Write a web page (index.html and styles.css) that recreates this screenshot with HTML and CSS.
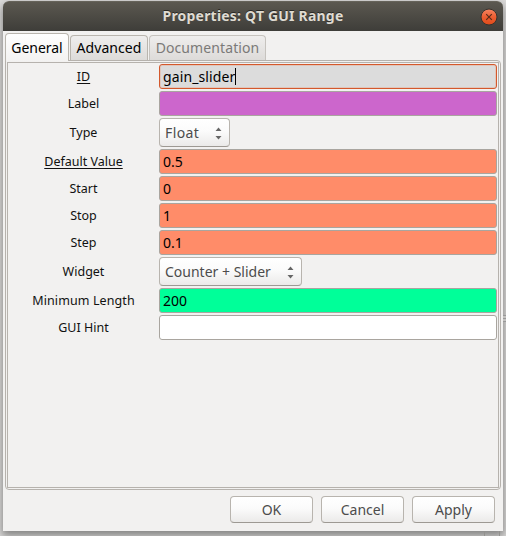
FILE: index.html
```
<!DOCTYPE html>
<html lang="en">
<head>
<meta charset="utf-8">
<title>Properties: QT GUI Range</title>
<link rel="stylesheet" href="styles.css">
</head>
<body>
<div class="window">
  <header class="titlebar">
    <h1>Properties: QT GUI Range</h1>
    <svg class="close" viewBox="0 0 18 18"><defs><linearGradient id="g" x2="0" y2="1"><stop offset="0" stop-color="#f58562"/><stop offset=".5" stop-color="#ec5e32"/><stop offset="1" stop-color="#df4a19"/></linearGradient></defs><circle cx="9" cy="9" r="8" fill="url(#g)" stroke="#35332e"/><path d="M6.2 6.2l5.6 5.6M11.8 6.2l-5.6 5.6" stroke="#5a2c1a" stroke-width="1.2"/></svg>
  </header>
  <nav class="tabs">
    <div class="tab active">General</div>
    <div class="tab advanced">Advanced</div>
    <div class="tab docs">Documentation</div>
  </nav>
  <main class="panel">
    <div class="form">
      <label class="key"><span>ID</span></label><div class="field focus"><span class="id-value">gain_slider</span><i class="caret"></i></div>
      <label>Label</label><div class="field purple"></div>
      <label>Type</label><div class="select float"><span>Float</span><svg viewBox="0 0 7 13"><path d="M3.5 0.5L6.5 4h-6zM.5 9h6l-3 3.5z"/></svg></div>
      <label class="key"><span>Default Value</span></label><div class="field coral">0.5</div>
      <label>Start</label><div class="field coral">0</div>
      <label>Stop</label><div class="field coral">1</div>
      <label>Step</label><div class="field coral">0.1</div>
      <label>Widget</label><div class="select counter"><span>Counter + Slider</span><svg viewBox="0 0 7 13"><path d="M3.5 0.5L6.5 4h-6zM.5 9h6l-3 3.5z"/></svg></div>
      <label class="minimum">Minimum Length</label><div class="field green">200</div>
      <label>GUI Hint</label><div class="field"></div>
    </div>
  </main>
  <footer class="actions">
    <button>OK</button><button>Cancel</button><button>Apply</button>
  </footer>
</div>
<i class="grip"></i>
<i class="behind"></i>
</body>
</html>
```
FILE: styles.css
```
* { box-sizing: border-box; }
body {
  margin: 0;
  width: 506px;
  height: 536px;
  overflow: hidden;
  padding: 1px 3px 5px;
  position: relative;
  background: #dddcdb;
  font: 14px/18px "Noto Sans", "Open Sans", sans-serif;
  color: #111;
}
.window {
  height: 530px;
  display: flex;
  flex-direction: column;
  background: #f2f1f0;
  border-radius: 6px 6px 0 0;
  box-shadow: 0 4px 8px 1px rgba(0, 0, 0, .4);
  position: relative;
  z-index: 1;
}
.titlebar {
  height: 30px;
  flex: none;
  display: flex;
  align-items: center;
  background: linear-gradient(#5b5850, #3e3d39);
  border-top: 1px solid #66635a;
  border-radius: 6px 6px 0 0;
  padding-right: 5px;
}
h1 {
  flex: 1;
  margin: 0;
  padding: 0 0 2px 23px;
  text-align: center;
  font-size: 14px;
  line-height: 18px;
  letter-spacing: .2px;
  color: #dfdbd2;
  text-shadow: 0 -1px #292824;
}
.close { width: 18px; height: 18px; }
.tabs {
  display: flex;
  align-items: flex-end;
  gap: 1px;
  height: 29px;
  padding-left: 2px;
  margin-top: 2px;
  position: relative;
  z-index: 1;
}
.tab {
  height: 25px;
  margin-bottom: 2px;
  display: flex;
  align-items: center;
  justify-content: center;
  white-space: nowrap;
  border: 1px solid #b9b5ae;
  border-bottom: 0;
  border-radius: 4px 4px 0 0;
  background: linear-gradient(#efeeed, #dddbd9);
  color: #000;
}
.active {
  width: 64px;
  height: 28px;
  margin-bottom: 1px;
  background: linear-gradient(#fff, #f3f2f1);
  letter-spacing: -.05px;
}
.advanced { width: 78px; letter-spacing: .08px; }
.docs {
  width: 117px;
  border-color: #c6c3be;
  color: #7b7a78;
  letter-spacing: .1px;
}
.panel {
  margin: -2px 2px 0;
  height: 430px;
  border: 1px solid #b6b2ad;
  border-radius: 0 4px 4px;
  padding: 1px;
}
.form {
  height: 100%;
  border: 1px solid #b6b2ad;
  padding: 1px 1px 0 0;
  display: grid;
  grid-template-columns: 151px 338px;
  grid-auto-rows: max-content;
  row-gap: 2px;
}
label {
  display: flex;
  align-items: center;
  justify-content: center;
  font-size: 12.5px;
}
.key span {
  text-decoration: underline;
  text-decoration-thickness: 1px;
  text-underline-offset: 2px;
  text-decoration-skip-ink: none;
}
.minimum { letter-spacing: .1px; }
.field {
  height: 25px;
  display: flex;
  align-items: center;
  padding: 0 3px;
  border: 1px solid #a9a59f;
  border-radius: 3px;
  background: #fff;
  color: #000;
}
.focus { background: #dcdcdc; border-color: #d4582c; box-shadow: inset 0 0 0 1px #e0c6bb; }
.id-value { letter-spacing: .12px; }
.caret { width: 1px; height: 17px; background: #000; }
.purple { background: #cc66cc; }
.coral { background: #ff8c69; }
.green { background: #00ff99; }
.select, button {
  border: 1px solid #b8b4ae;
  border-bottom-color: #9d9993;
  border-radius: 4px;
  background: linear-gradient(#fff, #fbfbfb 45%, #ebeae9);
  color: #4c4c4c;
}
.select {
  height: 29px;
  display: flex;
  align-items: center;
  justify-content: space-between;
  padding: 0 7px 0 5px;
}
.select svg {
  width: 7px;
  height: 13px;
  margin-top: 2px;
  fill: #666;
}
.float { width: 71px; letter-spacing: .4px; }
.counter { width: 143px; }
.actions {
  display: flex;
  justify-content: flex-end;
  gap: 8px;
  padding: 6px 8px 0 0;
}
button {
  width: 83px;
  height: 27px;
  padding: 0;
  font: inherit;
}
.grip, .behind { position: absolute; z-index: 2; }
.grip {
  right: 0;
  top: 315px;
  width: 3px;
  height: 7px;
  background: repeating-linear-gradient(#999 0 1px, #c4c2c0 1px 3px);
}
.behind {
  left: 484px;
  top: 531px;
  width: 16px;
  height: 5px;
  border: solid #92918e;
  border-width: 0 1px;
}
```
